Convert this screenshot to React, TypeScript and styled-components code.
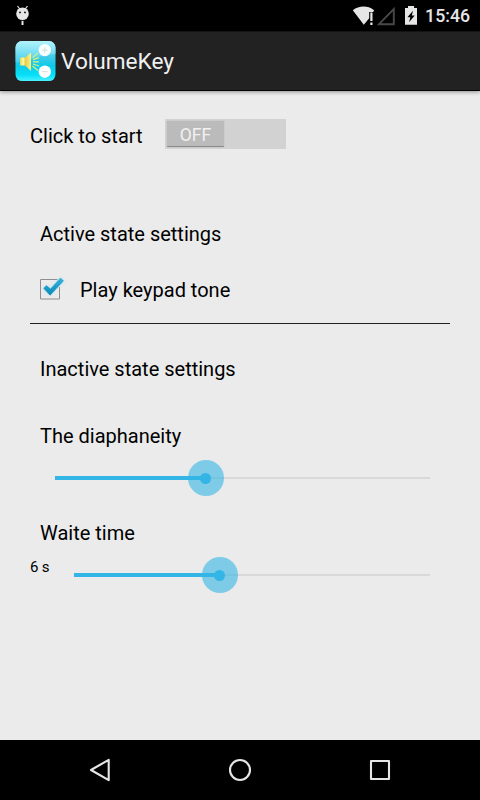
import React from "react";
import styled, { createGlobalStyle } from "styled-components";

const GlobalStyle = createGlobalStyle`
  * { box-sizing: border-box; }
  body { margin: 0; background: #ebebeb; }
`;

const Screen = styled.div`
  width: 480px;
  height: 800px;
  display: flex;
  flex-direction: column;
  overflow: hidden;
  background: #ebebeb;
  color: #000;
  font-family: Roboto, "Noto Sans", sans-serif;
  font-size: 20px;
`;

const StatusBar = styled.header`
  height: 31px;
  flex: none;
  display: flex;
  align-items: flex-start;
  justify-content: space-between;
  padding: 0 10px 0 15px;
  background: #000;
`;

const StatusIcons = styled.div`
  display: flex;
  align-items: flex-start;
  height: 31px;
`;

const Clock = styled.span`
  margin-left: 7px;
  font-size: 17.7px;
  line-height: 33px;
  font-weight: 500;
  color: #e6e6e6;
`;

const ActionBar = styled.div`
  height: 60px;
  flex: none;
  display: flex;
  align-items: center;
  padding: 0 15px;
  gap: 4px;
  background: #222;
  border-top: 1px solid #141414;
  border-bottom: 1px solid #040404;
  box-shadow: 0 1px 4px rgba(0, 0, 0, 0.4);
`;

const Title = styled.h1`
  margin: 0;
  font-size: 22.6px;
  font-weight: 400;
  line-height: 30px;
  padding-top: 2px;
  color: #f0f0f0;
`;

const Content = styled.main`
  flex: 1;
  display: flex;
  flex-direction: column;
  padding: 0 30px;
`;

const Row = styled.div<{ $height: number; $top?: number; $indent?: number }>`
  height: ${(p) => p.$height}px;
  margin-top: ${(p) => p.$top ?? 0}px;
  padding-left: ${(p) => p.$indent ?? 0}px;
  flex: none;
  display: flex;
  align-items: center;
`;

const Label = styled.span`
  line-height: 24px;
  white-space: nowrap;
`;

const StartLabel = styled(Label)`
  width: 135px;
`;

const Toggle = styled.div`
  width: 121px;
  height: 30px;
  margin-top: -3px;
  padding: 2px;
  background: #d2d2d2;
`;

const ToggleThumb = styled.div`
  width: 57px;
  height: 26px;
  display: flex;
  align-items: center;
  justify-content: center;
  padding-top: 3px;
  border-radius: 1px;
  background: #bbb;
  border-bottom: 1px solid #8a8a8a;
  box-shadow: 0 0 1px #999;
  color: #f1f1f1;
  font-size: 17.5px;
`;

const Divider = styled.hr`
  width: 100%;
  height: 1px;
  margin: 7px 0 0;
  border: 0;
  background: #222;
  flex: none;
`;

const Seconds = styled.span`
  width: 44px;
  font-size: 15px;
  line-height: 18px;
  margin-top: -17px;
  letter-spacing: -0.2px;
`;

const Track = styled.div<{ $width: number }>`
  width: ${(p) => p.$width}px;
  height: 36px;
  display: flex;
  align-items: center;
`;

const Filled = styled.div<{ $width: number }>`
  width: ${(p) => p.$width}px;
  height: 4px;
  background: #33b5e5;
`;

const Rest = styled.div`
  flex: 1;
  height: 2px;
  background: #d9d9d9;
`;

const Thumb = styled.div`
  width: 36px;
  height: 36px;
  margin: 0 -18px;
  z-index: 1;
  flex: none;
  display: flex;
  align-items: center;
  justify-content: center;
  border-radius: 50%;
  background: rgba(51, 181, 229, 0.6);

  &::after {
    content: "";
    width: 11px;
    height: 11px;
    border-radius: 50%;
    background: #33b5e5;
  }
`;

const NavBar = styled.nav`
  height: 60px;
  flex: none;
  display: flex;
  align-items: center;
  justify-content: center;
  gap: 110px;
  background: #000;
`;

function Slider({ width, value }: { width: number; value: number }) {
  return (
    <Track $width={width}>
      <Filled $width={value} />
      <Thumb />
      <Rest />
    </Track>
  );
}

function DebugIcon() {
  return (
    <svg width="15" height="31" viewBox="0 0 15 31">
      <path d="M2.5 6l3 4M12.5 6l-3 4" stroke="#e6e6e6" strokeWidth="1.2" />
      <circle cx="7.5" cy="13.7" r="6.3" fill="#e6e6e6" />
      <circle cx="5" cy="12.4" r="0.9" fill="#000" />
      <circle cx="10" cy="12.4" r="0.9" fill="#000" />
      <path d="M7.5 20.8V25" stroke="#e6e6e6" strokeWidth="2" />
    </svg>
  );
}

function SignalIcons() {
  return (
    <svg width="66" height="31" viewBox="352 0 66 31">
      <path d="M352.8 10.2C356 7.8 359.8 6.6 363.5 6.6s7.3 1.1 10.6 3.6L373.2 12H369.2v6.3L363.8 24.7z" fill="#e6e6e6" />
      <path d="M371.4 12.5v8.4M371.4 22.5v2.4" stroke="#e6e6e6" strokeWidth="2.2" />
      <path d="M379 24.2L393.8 9v15.2z" fill="none" stroke="#484848" strokeWidth="1.9" />
      <path d="M405 8h3V6h6v2h3v16.8h-12z" fill="#e6e6e6" />
      <path d="M413 10.8l-5.6 6.4h2.9l-1.2 5 5.6-6.8h-2.9z" fill="#000" />
    </svg>
  );
}

function AppIcon() {
  return (
    <svg width="42" height="42" viewBox="0 -0.6 42 42">
      <defs>
        <linearGradient id="sky" x1="0" y1="0" x2="0" y2="1">
          <stop offset="0" stopColor="#8de6f7" />
          <stop offset=".4" stopColor="#3dcbe9" />
          <stop offset=".6" stopColor="#0fcaea" />
          <stop offset=".82" stopColor="#06e0f8" />
          <stop offset="1" stopColor="#5cf4ff" />
        </linearGradient>
        <linearGradient id="gloss" x1="0" y1="0" x2="0" y2="1">
          <stop offset="0" stopColor="#b4f2fc" />
          <stop offset="1" stopColor="#62d9f0" stopOpacity=".45" />
        </linearGradient>
        <linearGradient id="horn" x1="0" y1="0" x2="1" y2="0">
          <stop offset="0" stopColor="#e8d25a" />
          <stop offset=".3" stopColor="#fffaa8" />
          <stop offset=".5" stopColor="#eacf48" />
          <stop offset="1" stopColor="#fbf48e" />
        </linearGradient>
        <clipPath id="tile"><rect x=".5" y=".5" width="40" height="40" rx="6.5" /></clipPath>
      </defs>
      <g clipPath="url(#tile)">
        <rect width="42" height="42" fill="url(#sky)" />
        <path d="M0 0H42V13Q26 14 15 19 7 21.500 0 22z" fill="url(#gloss)" />
      </g>
      <path d="M5 17h5l6-5v18.500L10 25H5z" fill="url(#horn)" />
      <path d="M17.500 17l5.500-4.500M18 19l6-2M18 21.200h6M18 23.400l6 2M17.500 25.400l5.500 4.500" stroke="#dcf080" strokeWidth="1.200" />
      <circle cx="29.800" cy="9.500" r="6.200" fill="#f8ffff" />
      <circle cx="29.800" cy="31.100" r="6.200" fill="#fff" />
      <path d="M27 9.500h5.600M29.800 6.700v5.600M27 31.100h5.600" stroke="#d3dcde" strokeWidth="1" />
    </svg>
  );
}

function CheckIcon() {
  return (
    <svg width="40" height="40" viewBox="0 0 40 40">
      <defs>
        <linearGradient id="tick" x1="0" y1="0" x2="0" y2="1">
          <stop offset="0" stopColor="#38b3de" />
          <stop offset="1" stopColor="#0788b5" />
        </linearGradient>
        <filter id="glow" x="-30%" y="-30%" width="160%" height="160%">
          <feGaussianBlur stdDeviation="1.5" />
        </filter>
      </defs>
      <path d="M17.5 9.5H.5v19.5h19V17" fill="none" stroke="#8e8e8e" strokeWidth="1" />
      <path d="M3.3 18.2l3.200-3 4 3.600L20.400 7.700l3.500 3-13.800 14.800z" fill="#89d7f3" opacity=".7" filter="url(#glow)" />
      <path d="M3.3 18.2l3.200-3 4 3.600L20.400 7.700l3.500 3-13.800 14.800z" fill="url(#tick)" />
    </svg>
  );
}

function NavIcon({ d, circle }: { d?: string; circle?: boolean }) {
  return (
    <svg width="30" height="30" viewBox="0 0 30 30" fill="none" stroke="#e6e6e6" strokeWidth="2.1" strokeLinejoin="round">
      {circle ? <circle cx="15" cy="15" r="10" /> : <path d={d} />}
    </svg>
  );
}

export default function App() {
  return (
    <>
      <GlobalStyle />
      <Screen>
        <StatusBar>
          <DebugIcon />
          <StatusIcons>
            <SignalIcons />
            <Clock>15:46</Clock>
          </StatusIcons>
        </StatusBar>
        <ActionBar>
          <AppIcon />
          <Title>VolumeKey</Title>
        </ActionBar>
        <Content>
          <Row $height={89}>
            <StartLabel>Click to start</StartLabel>
            <Toggle>
              <ToggleThumb>OFF</ToggleThumb>
            </Toggle>
          </Row>
          <Row $height={60} $top={24} $indent={10}>
            <Label>Active state settings</Label>
          </Row>
          <Row $height={52} $indent={10}>
            <CheckIcon />
            <Label>Play keypad tone</Label>
          </Row>
          <Divider />
          <Row $height={90} $indent={10}>
            <Label>Inactive state settings</Label>
          </Row>
          <Row $height={44} $indent={10}>
            <Label>The diaphaneity</Label>
          </Row>
          <Row $height={40} $indent={25}>
            <Slider width={375} value={150.5} />
          </Row>
          <Row $height={40} $top={15} $indent={10}>
            <Label>Waite time</Label>
          </Row>
          <Row $height={44}>
            <Seconds>6 s</Seconds>
            <Slider width={356} value={145.8} />
          </Row>
        </Content>
        <NavBar>
          <NavIcon d="M23.7 4.800v20.400L6 15z" />
          <NavIcon circle />
          <NavIcon d="M6 6h18v18H6z" />
        </NavBar>
      </Screen>
    </>
  );
}
